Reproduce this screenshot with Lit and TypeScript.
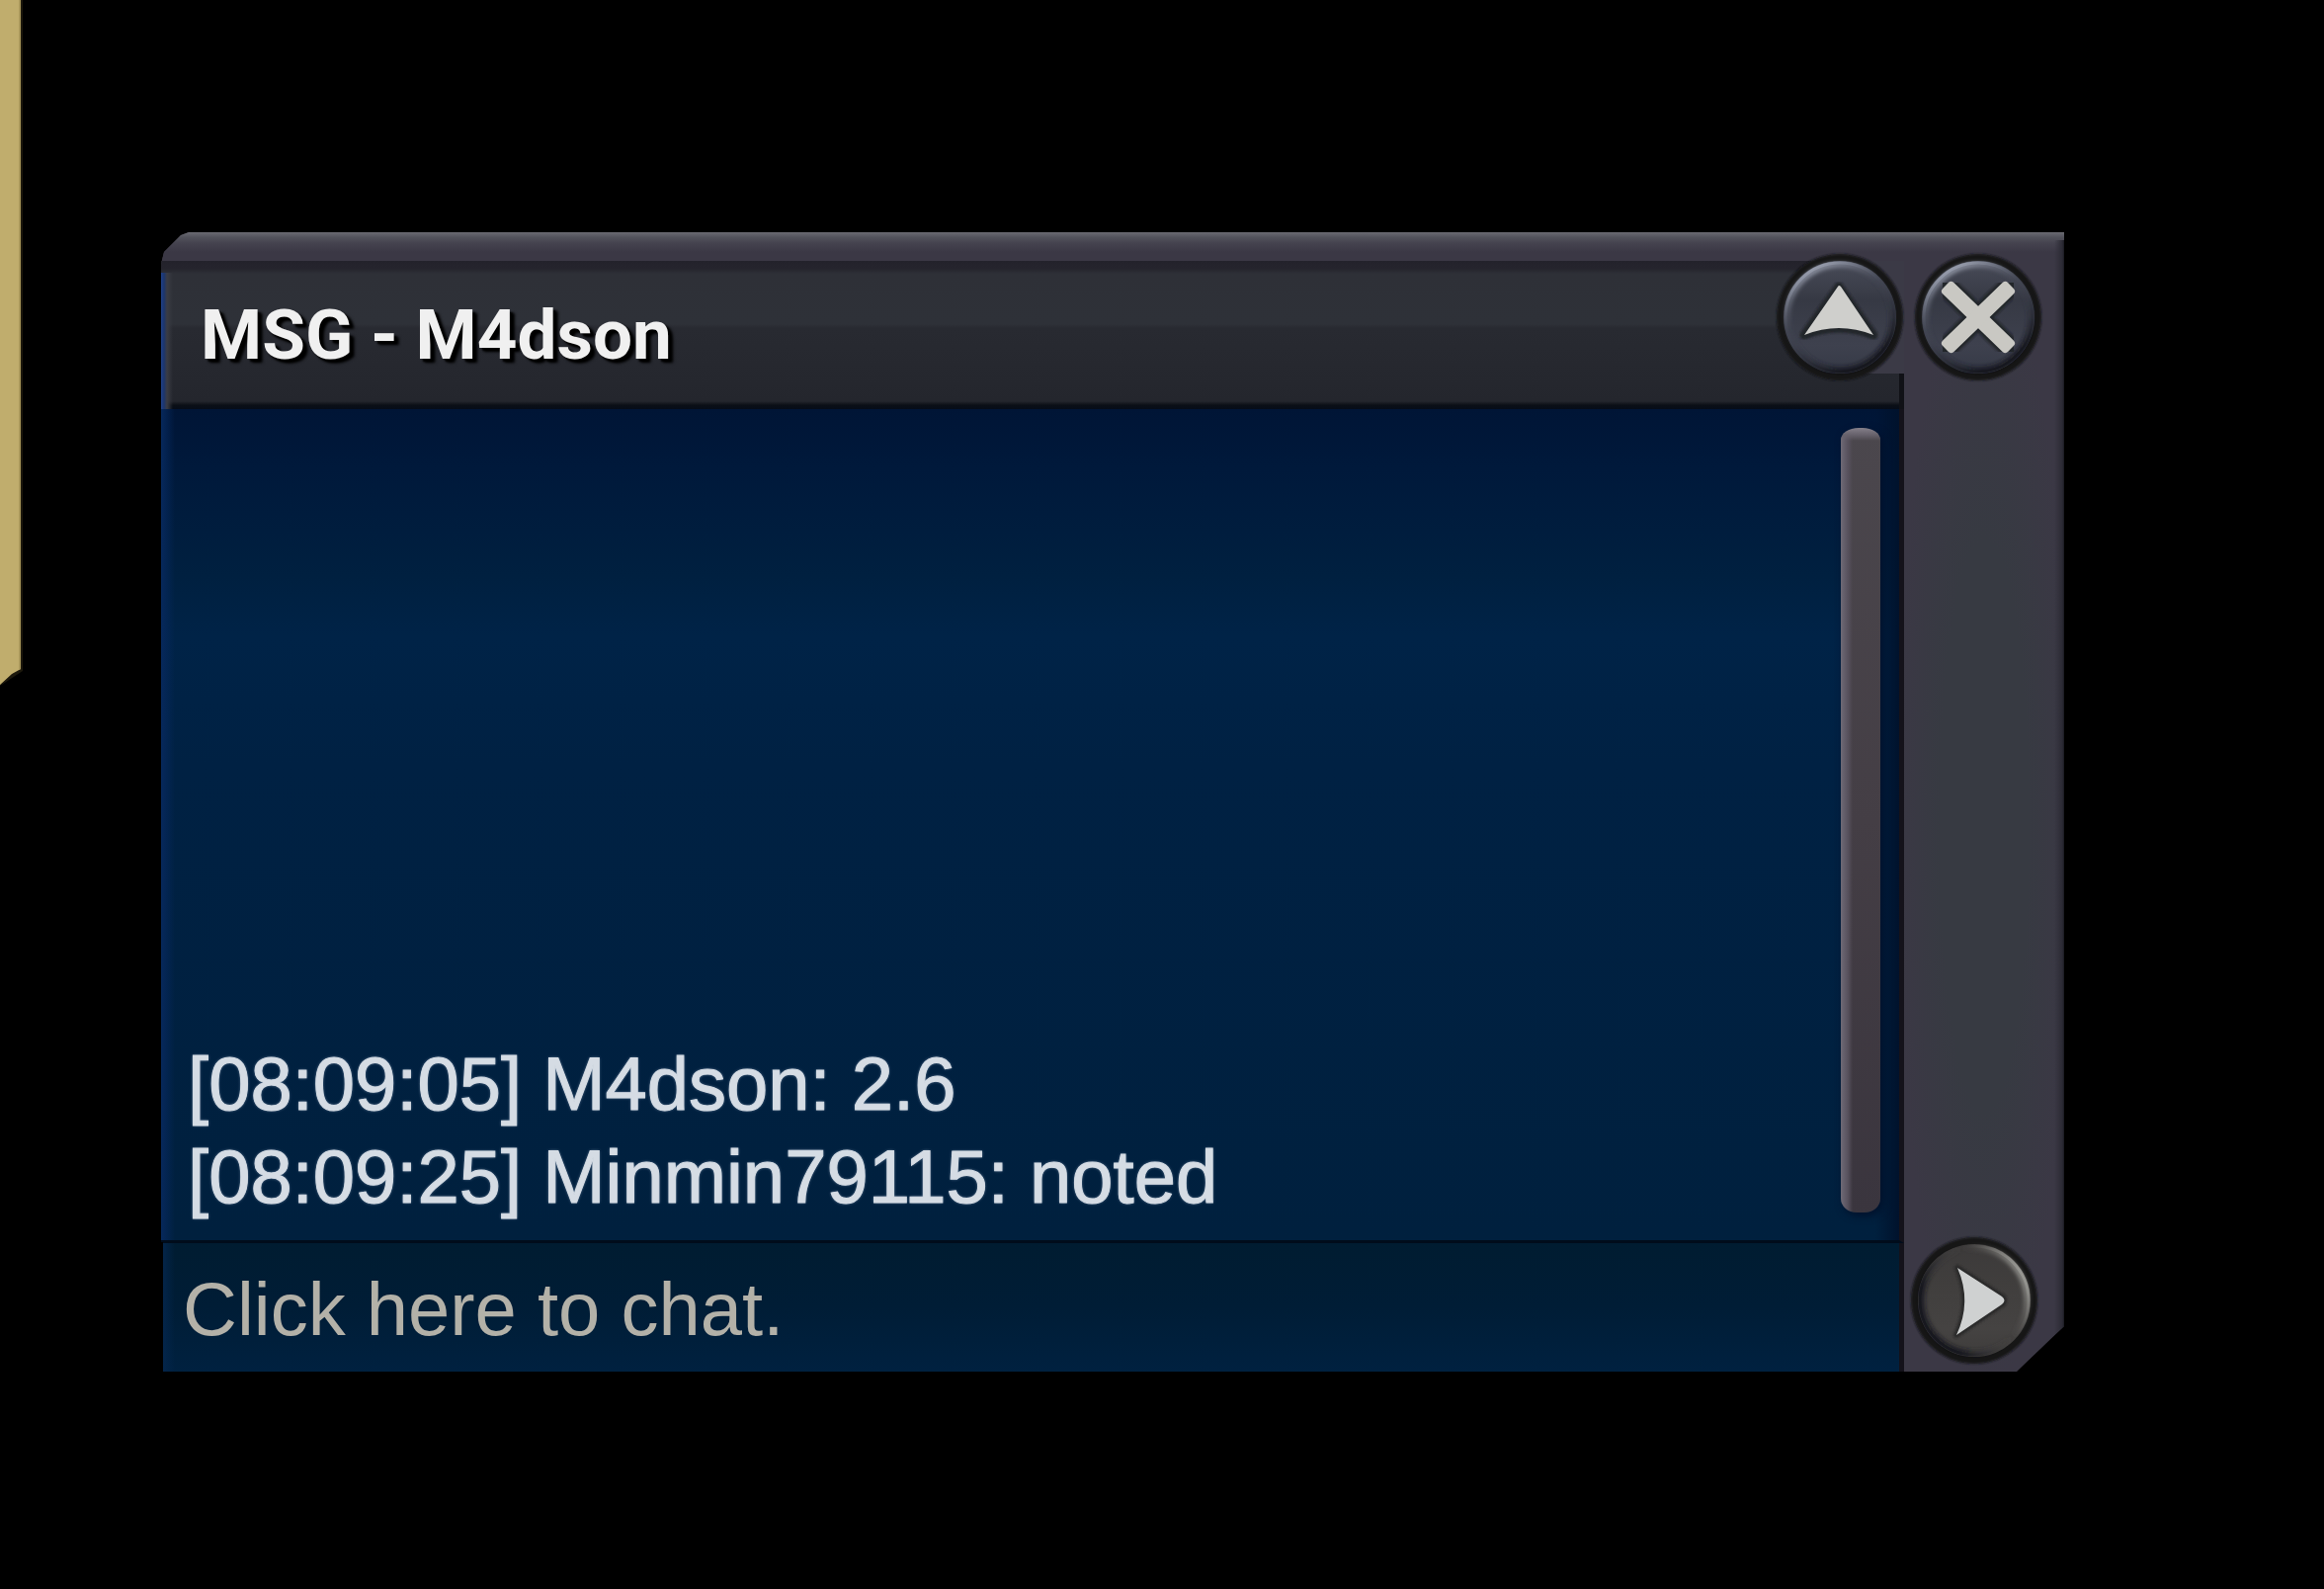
import { LitElement, html, css, svg } from "lit";
import { customElement, property, state } from "lit/decorators.js";

type Glyph = "up" | "close" | "send";

interface ChatLine {
  time: string;
  author: string;
  text: string;
}

/** Round bevelled button used on the chat window frame. */
@customElement("orb-button")
class OrbButton extends LitElement {
  @property() glyph: Glyph = "close";
  @property() label = "";

  static styles = css`
    :host {
      display: block;
      width: 128px;
      height: 128px;
      flex: none;
    }
    .orb {
      display: block;
      width: 100%;
      height: 100%;
      padding: 0;
      border: 0;
      border-radius: 50%;
      background: none;
      cursor: pointer;
    }
    .art {
      display: block;
      width: 100%;
      height: 100%;
      overflow: visible;
    }
  `;

  private shape() {
    switch (this.glyph) {
      case "up":
        return svg`
          <path d="M63 33 L98 82 Q63 68 28 82 Z" fill="none" stroke="#24252c" stroke-width="9" stroke-linejoin="round" filter="url(#edge)" />
          <path d="M62 33 Q63 31 65 33 L98 82 Q63 68 28 82 Z" fill="#cfcfcc" />`;
      case "close":
        return svg`
          <path d="M34 35 L94 93 M94 35 L34 93" fill="none" stroke="#24252c" stroke-width="22" stroke-linecap="round" filter="url(#edge)" />
          <g fill="#c9c8c3">
            <rect x="18" y="56" width="92" height="16" rx="4" transform="rotate(44 64 64)" />
            <rect x="18" y="56" width="92" height="16" rx="4" transform="rotate(-44 64 64)" />
          </g>`;
      default:
        return svg`
          <path d="M47 31 L92 60 Q97 64 92 68 L46 99 Q62 65 47 31 Z" fill="none" stroke="#2c2b2b" stroke-width="6" stroke-linejoin="round" filter="url(#edge)" />
          <path d="M47 31 L92 60 Q97 64 92 68 L46 99 Q62 65 47 31 Z" fill="#cfd1d1" />`;
    }
  }

  render() {
    const warm = this.glyph === "send";
    return html`
      <button class="orb" type="button" aria-label=${this.label}>
        <svg class="art" viewBox="0 0 128 128" aria-hidden="true">
          <defs>
            <linearGradient id="face" x1="0" y1="0" x2="0" y2="1">
              <stop offset="0" stop-color=${warm ? "#3c3a3a" : "#484b58"} />
              <stop offset="0.35" stop-color=${warm ? "#403e3d" : "#363944"} />
              <stop offset="0.75" stop-color=${warm ? "#454342" : "#3e414e"} />
              <stop offset="1" stop-color=${warm ? "#3e3c3b" : "#353946"} />
            </linearGradient>
            <linearGradient id="shine" x1=${warm ? "1" : "0.2"} y1=${warm ? "0.25" : "0"} x2=${warm ? "0.2" : "0.7"} y2=${warm ? "0.7" : "0.9"}>
              <stop offset="0" stop-color=${warm ? "#a9a9a4" : "#aab0c0"} />
              <stop offset="0.45" stop-color=${warm ? "#4a4846" : "#474b59"} stop-opacity=${warm ? "0" : "0.3"} />
              <stop offset="1" stop-color="#15161d" stop-opacity="0.9" />
            </linearGradient>
            <filter id="soft" x="-10%" y="-10%" width="120%" height="120%">
              <feGaussianBlur stdDeviation="2" />
            </filter>
            <filter id="edge" x="-10%" y="-10%" width="120%" height="120%">
              <feGaussianBlur stdDeviation="1" />
            </filter>
          </defs>
          <circle cx="64" cy="64" r="64" fill="#141519" filter="url(#edge)" />
          <circle cx="64" cy="64" r="57" fill="url(#face)" />
          <circle cx="64" cy="64" r="53" fill="none" stroke="url(#shine)" stroke-width="5" filter="url(#soft)" />
          <circle cx="64" cy="64" r="55" fill="none" stroke="url(#shine)" stroke-width="3" />
          ${this.shape()}
        </svg>
      </button>
    `;
  }
}

@customElement("app-root")
class AppRoot extends LitElement {
  @state() private lines: ChatLine[] = [
    { time: "08:09:05", author: "M4dson", text: "2.6" },
    { time: "08:09:25", author: "Minmin79115", text: "noted" },
  ];

  static styles = css`
    :host {
      display: block;
      background: #000;
    }
    .desk {
      position: relative;
      box-sizing: border-box;
      display: flex;
      min-height: 100vh;
      padding: 235px 263px 220px 163px;
      overflow: hidden;
      background: #000;
      font-family: "Liberation Sans", Arial, sans-serif;
    }
    .slab {
      position: absolute;
      left: 0;
      top: 0;
      width: 24px;
      height: 694px;
    }
    .window {
      flex: 1;
      display: grid;
      grid-template-columns: minmax(0, 1fr) 162px;
      background:
        linear-gradient(#6a6a72, #53535c 5px, #45434f 11px, #3b3845 20px, #3b3845 30px, transparent 30px),
        linear-gradient(90deg, #3b3845, #3b3845);
      clip-path: polygon(
        0 32px, 3px 20px, 20px 3px, 28px 0,
        100% 0, 100% calc(100% - 46px), calc(100% - 48px) 100%, 2px 100%, 2px calc(100% - 131px), 0 calc(100% - 131px)
      );
    }
    .main {
      display: flex;
      flex-direction: column;
      min-width: 0;
    }
    .titlebar {
      display: flex;
      align-items: center;
      justify-content: space-between;
      height: 150px;
      margin-top: 29px;
      padding-left: 40px;
      background:
        linear-gradient(#101116, #101116) 100% 114px / 5px 36px no-repeat,
        linear-gradient(90deg, #1f4088, #1c356c 3px, #3a3c44 6px, transparent 12px) 0 12px no-repeat,
        linear-gradient(
          #23222b, #25242d 8px, #2e3037 13px, #2e3138 64px,
          #282a31 68px, #24262d 142px, #0b0f16 146px, #060c18
        );
    }
    .title {
      margin: 0;
      font: 700 71px/84px Roboto, "Liberation Sans", sans-serif;
      color: #f0f0f0;
      text-shadow: 3px 3px 2px #000, 5px 4px 3px #000;
      white-space: nowrap;
    }
    .corner {
      align-self: flex-start;
      height: 114px;
      padding-right: 1px;
      background: linear-gradient(90deg, transparent 40px, #3b3a46 41px);
    }
    .corner orb-button {
      margin-top: -7px;
    }
    .log {
      flex: 1;
      display: flex;
      justify-content: space-between;
      padding: 19px 19px 17px 27px;
      border-right: 5px solid #14121a;
      border-bottom: 3px solid #000c1b;
      background:
        linear-gradient(270deg, #00122c, transparent 24px),
        linear-gradient(90deg, #06285c, transparent 14px),
        linear-gradient(#001536, #00193b 60px, #002040 170px, #002347 230px, #002143 360px, #00203e);
    }
    .lines {
      align-self: flex-end;
      margin: 0;
      padding: 0;
      list-style: none;
      font-size: 76px;
      line-height: 94px;
      color: #d5dce4;
      -webkit-text-stroke: 1px #d5dce4;
      text-shadow: 0 0 3px #7d93ad;
    }
    .thumb {
      flex: none;
      width: 40px;
      margin-bottom: 11px;
      border-radius: 18px 18px 16px 16px / 12px 12px 14px 14px;
      background:
        linear-gradient(#85808a, #67626c 7px, transparent 13px),
        linear-gradient(90deg, #6f6a76, #58525e 7px, transparent 12px),
        linear-gradient(#4b474d, #443e45 50%, #3a353e);
      box-shadow: 3px 3px 8px #00102a;
    }
    .entry {
      box-sizing: border-box;
      width: 100%;
      height: 130px;
      margin: 0;
      padding: 2px 21px 0 22px;
      border: 0;
      border-right: 5px solid #14121a;
      border-radius: 0;
      outline: 0;
      background:
        linear-gradient(90deg, #04264d, transparent 14px),
        linear-gradient(#001c31, #001d36 50%, #002140);
      font: 400 76px/94px "Liberation Sans", Arial, sans-serif;
      color: #bdbbb0;
    }
    .entry::placeholder {
      color: #b3b1a8;
      opacity: 1;
    }
    .side {
      display: flex;
      flex-direction: column;
      justify-content: space-between;
      align-items: flex-start;
      padding: 22px 23px 8px 7px;
      background:
        linear-gradient(90deg, transparent 152px, #2c2b35 160px, #1b1b22) 0 8px no-repeat,
        radial-gradient(ellipse 90px 50% at 50% 52%, #373a42 50%, transparent);
    }
    .side orb-button:first-child {
      align-self: flex-end;
    }
  `;

  render() {
    return html`
      <div class="desk">
        <svg class="slab" viewBox="0 0 24 694" aria-hidden="true">
          <path d="M0 0 H23 V679 L0 694 Z" fill="#1c180c" />
          <path d="M0 0 H21 V677 L12 682 L0 693 Z" fill="#c0ad6d" />
          <path d="M19 0 H21 V677 L19 678 Z" fill="#a8965a" />
        </svg>
        <section class="window" aria-label="MSG - M4dson">
          <div class="main">
            <header class="titlebar">
              <h1 class="title">MSG - M4dson</h1>
              <div class="corner">
                <orb-button glyph="up" label="Collapse"></orb-button>
              </div>
            </header>
            <div class="log">
              <ul class="lines">
                ${this.lines.map(
                  (l) => html`<li>[${l.time}] ${l.author}: ${l.text}</li>`
                )}
              </ul>
              <div class="thumb"></div>
            </div>
            <input class="entry" type="text" aria-label="Chat message" placeholder="Click here to chat." />
          </div>
          <div class="side">
            <orb-button glyph="close" label="Close"></orb-button>
            <orb-button glyph="send" label="Send"></orb-button>
          </div>
        </section>
      </div>
    `;
  }
}
